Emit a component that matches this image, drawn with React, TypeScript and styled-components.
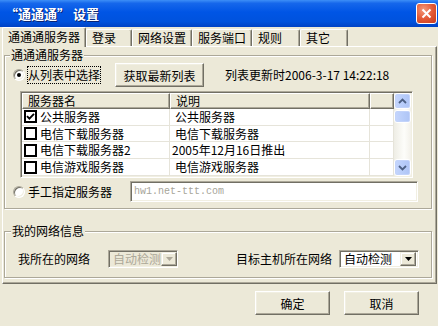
import React from 'react'
import styled, { createGlobalStyle, css } from 'styled-components'

const GlobalStyle = createGlobalStyle`
  * {
    box-sizing: border-box;
  }
  html,
  body {
    margin: 0;
    padding: 0;
  }
  body {
    background: #ece9d8;
    font-family: 'Noto Sans CJK SC', 'DejaVu Sans', sans-serif;
    font-size: 12px;
    color: #000;
  }
`

const Window = styled.div`
  width: 438px;
  height: 326px;
  display: flex;
  flex-direction: column;
  background: #ece9d8;
  overflow: hidden;
`

const TitleBar = styled.div`
  height: 27px;
  flex: none;
  display: flex;
  align-items: center;
  justify-content: space-between;
  padding: 0 1px 0 5px;
  background: linear-gradient(
    to bottom,
    #3d8ff7 0%,
    #1667eb 12%,
    #0055e5 45%,
    #0052dd 80%,
    #0042c4 100%
  );
`

const Title = styled.span`
  color: #fff;
  font-weight: bold;
  font-size: 13px;
  line-height: 1;
  text-shadow: 1px 1px 0 #0c2472;
`

const CloseButton = styled.div`
  width: 21px;
  height: 21px;
  border: 1px solid #fff;
  border-radius: 3px;
  display: flex;
  align-items: center;
  justify-content: center;
  background: radial-gradient(circle at 35% 30%, #f39a7c 0%, #e45a36 50%, #c73a1c 100%);
`

const Body = styled.div`
  flex: 1;
  display: flex;
  flex-direction: column;
`

const TabStrip = styled.div`
  display: flex;
  align-items: flex-end;
  height: 19px;
  padding-left: 2px;
  position: relative;
  z-index: 1;
`

const Tab = styled.div<{ $w: number; $active?: boolean }>`
  width: ${p => p.$w}px;
  height: ${p => (p.$active ? 20 : 17)}px;
  margin-bottom: ${p => (p.$active ? -1 : 0)}px;
  padding: ${p => (p.$active ? '0 0 2px 5px' : '0 0 0 5px')};
  display: flex;
  align-items: center;
  background: #ece9d8;
  border-left: 1px solid #fff;
  border-top: 1px solid #fff;
  border-right: 1px solid #716f64;
  box-shadow: inset -1px 0 0 #aca899;
  border-top-left-radius: 2px;
  border-top-right-radius: 2px;
  line-height: 1;
`

const TabPanel = styled.div`
  margin-left: 2px;
  width: 435px;
  height: 238px;
  flex: none;
  border-left: 1px solid #fff;
  border-top: 1px solid #fff;
  border-right: 1px solid #716f64;
  border-bottom: 1px solid #716f64;
  box-shadow: inset -1px -1px 0 #aca899;
  padding: 8px 0 0 1px;
`

const GroupBox = styled.div<{ $h: number; $mt?: number }>`
  position: relative;
  width: 428px;
  height: ${p => p.$h}px;
  margin-top: ${p => p.$mt || 0}px;
  border: 1px solid #aca899;
  box-shadow: inset 1px 1px 0 #fff, 1px 1px 0 #fff;
`

const Legend = styled.span<{ $x: number }>`
  position: absolute;
  top: -8px;
  left: ${p => p.$x}px;
  padding: 0 1px;
  line-height: 14px;
  background: #ece9d8;
`

const ServerGroupInner = styled.div`
  padding: 7px 0 0 8px;
  display: flex;
  flex-direction: column;
`

const ChoiceRow = styled.div<{ $h: number; $mt?: number }>`
  display: flex;
  align-items: center;
  height: ${p => p.$h}px;
  margin-top: ${p => p.$mt || 0}px;
`

const Radio = styled.span<{ $on?: boolean }>`
  position: relative;
  flex: none;
  width: 12px;
  height: 12px;
  border-radius: 50%;
  background: #fff;
  border: 1px solid;
  border-color: #aca899 #fff #fff #aca899;
  box-shadow: inset 1px 1px 0 #716f64, inset -1px -1px 0 #f1efe2;
  ${p =>
    p.$on &&
    css`
      &::after {
        content: '';
        position: absolute;
        left: 3px;
        top: 3px;
        width: 4px;
        height: 4px;
        border-radius: 50%;
        background: #000;
      }
    `}
`

const RadioLabel = styled.span<{ $focus?: boolean }>`
  margin-left: 2px;
  padding: 1px 0;
  line-height: 14px;
  border: 1px ${p => (p.$focus ? 'dotted #000' : 'solid transparent')};
`

const PushButton = styled.button<{ $w: number; $ml?: number }>`
  width: ${p => p.$w}px;
  height: 24px;
  margin-left: ${p => p.$ml || 0}px;
  padding: 0;
  font: inherit;
  color: #000;
  background: #ece9d8;
  border: 1px solid;
  border-color: #fff #716f64 #716f64 #fff;
  box-shadow: inset -1px -1px 0 #aca899, inset 1px 1px 0 #f1efe2;
  display: flex;
  align-items: center;
  justify-content: center;
`

const UpdateTime = styled.span`
  margin-left: 21px;
  line-height: 1;
  white-space: nowrap;
`

const ListView = styled.div`
  width: 393px;
  height: 87px;
  margin: 4px 0 0 7px;
  border: 1px solid;
  border-color: #aca899 #fff #fff #aca899;
  box-shadow: inset 1px 1px 0 #716f64, inset -1px -1px 0 #f1efe2;
  padding: 1px;
  display: flex;
  background: #fff;
`

const ListTable = styled.div`
  width: 372px;
  display: flex;
  flex-direction: column;
`

const HeaderRow = styled.div`
  display: flex;
  height: 16px;
`

const HeaderCell = styled.div<{ $w: number }>`
  width: ${p => p.$w}px;
  padding-left: 5px;
  display: flex;
  align-items: center;
  background: #ece9d8;
  border-left: 1px solid #fff;
  border-top: 1px solid #fff;
  border-right: 1px solid #716f64;
  border-bottom: 1px solid #716f64;
  box-shadow: inset -1px -1px 0 #aca899;
  line-height: 1;
`

const Row = styled.div`
  display: flex;
  height: 17px;
`

const Cell = styled.div<{ $w: number; $pl?: number }>`
  width: ${p => p.$w}px;
  padding-left: ${p => p.$pl ?? 5}px;
  display: flex;
  align-items: center;
  gap: 3px;
  border-right: 1px solid #e6e4da;
  border-bottom: 1px solid #e6e4da;
  line-height: 1;
  white-space: nowrap;
`

const CheckBox = styled.span`
  flex: none;
  width: 13px;
  height: 13px;
  border: 2px solid #000;
  background: #fff;
  display: flex;
  align-items: center;
  justify-content: center;
`

const ScrollBar = styled.div`
  width: 17px;
  display: flex;
  flex-direction: column;
  background: linear-gradient(to right, #eeede5, #fdfdfa 60%, #f3f1ea);
`

const ScrollButton = styled.div<{ $h: number; $mt?: number }>`
  height: ${p => p.$h}px;
  margin-top: ${p => p.$mt || 0}px;
  border: 1px solid #fff;
  border-radius: 3px;
  background: linear-gradient(to right, #c6d6fc, #b8cdfa 50%, #aec4f5);
  box-shadow: inset 0 0 0 1px #c2d3fa;
  display: flex;
  align-items: center;
  justify-content: center;
`

const ScrollTrack = styled.div`
  flex: 1;
`

const TextInput = styled.div`
  width: 288px;
  height: 21px;
  margin-left: 17px;
  padding-left: 3px;
  display: flex;
  align-items: center;
  background: #fff;
  border: 1px solid;
  border-color: #aca899 #fff #fff #aca899;
  box-shadow: inset 1px 1px 0 #716f64, inset -1px -1px 0 #f1efe2;
  font-family: 'Liberation Mono', monospace;
  font-size: 10px;
  color: #a7a59a;
`

const NetRow = styled.div`
  display: flex;
  align-items: center;
  height: 18px;
  margin: 18px 0 0 13px;
  line-height: 1;
`

const NetLabel = styled.span<{ $ml?: number }>`
  margin-left: ${p => p.$ml || 0}px;
  white-space: nowrap;
`

const Combo = styled.div<{ $w: number; $ml: number; $disabled?: boolean }>`
  width: ${p => p.$w}px;
  height: 18px;
  margin-left: ${p => p.$ml}px;
  display: flex;
  align-items: center;
  padding: 2px;
  background: ${p => (p.$disabled ? '#ece9d8' : '#fff')};
  color: ${p => (p.$disabled ? '#aca899' : '#000')};
  border: 1px solid;
  border-color: #aca899 #fff #fff #aca899;
  box-shadow: inset 1px 1px 0 #716f64, inset -1px -1px 0 #f1efe2;
`

const ComboText = styled.span`
  flex: 1;
  padding-left: 2px;
  white-space: nowrap;
`

const ComboArrow = styled.span`
  width: 16px;
  height: 14px;
  flex: none;
  background: #ece9d8;
  border: 1px solid;
  border-color: #f1efe2 #716f64 #716f64 #f1efe2;
  box-shadow: inset -1px -1px 0 #aca899, inset 1px 1px 0 #fff;
  display: flex;
  align-items: center;
  justify-content: center;
`

const Footer = styled.div`
  flex: 1;
  display: flex;
  justify-content: flex-end;
  align-items: flex-start;
  gap: 14px;
  padding: 7px 19px 0 0;
`

const tabs = [
  { label: '通通通服务器', w: 84, active: true },
  { label: '登录', w: 46 },
  { label: '网络设置', w: 60 },
  { label: '服务端口', w: 60 },
  { label: '规则', w: 48 },
  { label: '其它', w: 48 },
]

const servers = [
  { name: '公共服务器', desc: '公共服务器', checked: true },
  { name: '电信下载服务器', desc: '电信下载服务器' },
  { name: '电信下载服务器2', desc: '2005年12月16日推出' },
  { name: '电信游戏服务器', desc: '电信游戏服务器' },
]

const Check = () => (
  <svg width="9" height="9" viewBox="0 0 9 9">
    <path d="M1 4.2 L3.4 6.6 L8 1.8" fill="none" stroke="#000" strokeWidth="1.9" />
  </svg>
)

const Chevron = ({ up }: { up?: boolean }) => (
  <svg width="9" height="6" viewBox="0 0 9 6">
    <path
      d={up ? 'M1 5 L4.5 1.5 L8 5' : 'M1 1 L4.5 4.5 L8 1'}
      fill="none"
      stroke="#4d6185"
      strokeWidth="1.8"
    />
  </svg>
)

const DownTriangle = ({ color }: { color: string }) => (
  <svg width="7" height="4" viewBox="0 0 7 4">
    <path d="M0 0 H7 L3.5 4 Z" fill={color} />
  </svg>
)

export default function App() {
  return (
    <Window>
      <GlobalStyle />
      <TitleBar>
        <Title>“通通通” 设置</Title>
        <CloseButton>
          <svg width="11" height="11" viewBox="0 0 11 11">
            <path d="M1.5 1.5 L9.5 9.5 M9.5 1.5 L1.5 9.5" stroke="#fff" strokeWidth="2" />
          </svg>
        </CloseButton>
      </TitleBar>
      <Body>
        <TabStrip>
          {tabs.map(t => (
            <Tab key={t.label} $w={t.w} $active={t.active}>
              {t.label}
            </Tab>
          ))}
        </TabStrip>
        <TabPanel>
          <GroupBox $h={154}>
            <Legend $x={5}>通通通服务器</Legend>
            <ServerGroupInner>
              <ChoiceRow $h={24}>
                <Radio $on />
                <RadioLabel $focus>从列表中选择</RadioLabel>
                <PushButton $w={89} $ml={14}>
                  获取最新列表
                </PushButton>
                <UpdateTime>列表更新时2006-3-17 14:22:18</UpdateTime>
              </ChoiceRow>
              <ListView>
                <ListTable>
                  <HeaderRow>
                    <HeaderCell $w={148}>服务器名</HeaderCell>
                    <HeaderCell $w={200}>说明</HeaderCell>
                    <HeaderCell $w={24} />
                  </HeaderRow>
                  {servers.map(s => (
                    <Row key={s.name}>
                      <Cell $w={148} $pl={2}>
                        <CheckBox>{s.checked && <Check />}</CheckBox>
                        {s.name}
                      </Cell>
                      <Cell $w={200} $pl={s.desc.startsWith('2005') ? 2 : 5}>
                        {s.desc}
                      </Cell>
                      <Cell $w={24} />
                    </Row>
                  ))}
                </ListTable>
                <ScrollBar>
                  <ScrollButton $h={16}>
                    <Chevron up />
                  </ScrollButton>
                  <ScrollButton $h={13} $mt={1} />
                  <ScrollTrack />
                  <ScrollButton $h={17}>
                    <Chevron />
                  </ScrollButton>
                </ScrollBar>
              </ListView>
              <ChoiceRow $h={21} $mt={3}>
                <Radio />
                <RadioLabel>手工指定服务器</RadioLabel>
                <TextInput>hw1.net-ttt.com</TextInput>
              </ChoiceRow>
            </ServerGroupInner>
          </GroupBox>
          <GroupBox $h={47} $mt={22}>
            <Legend $x={6}>我的网络信息</Legend>
            <NetRow>
              <NetLabel>我所在的网络</NetLabel>
              <Combo $w={70} $ml={18} $disabled>
                <ComboText>自动检测</ComboText>
                <ComboArrow>
                  <DownTriangle color="#aca899" />
                </ComboArrow>
              </Combo>
              <NetLabel $ml={58}>目标主机所在网络</NetLabel>
              <Combo $w={80} $ml={7}>
                <ComboText>自动检测</ComboText>
                <ComboArrow>
                  <DownTriangle color="#000" />
                </ComboArrow>
              </Combo>
            </NetRow>
          </GroupBox>
        </TabPanel>
        <Footer>
          <PushButton $w={75}>确定</PushButton>
          <PushButton $w={75}>取消</PushButton>
        </Footer>
      </Body>
    </Window>
  )
}
